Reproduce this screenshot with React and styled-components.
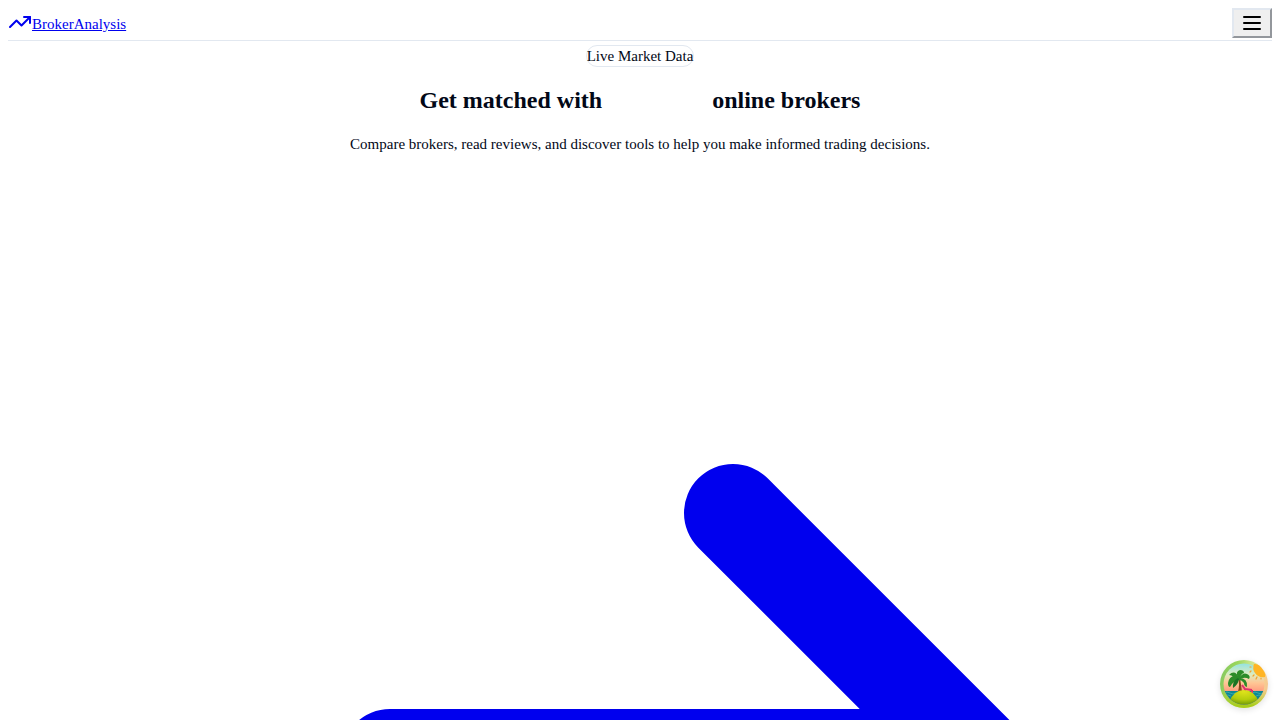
import React from "react";
import styled, { createGlobalStyle } from "styled-components";

const GlobalStyle = createGlobalStyle`
  body {
    margin: 8px;
    background: #ffffff;
    color: #020817;
    font-family: "Liberation Serif", "Times New Roman", serif;
    font-size: 15px;
    line-height: 18px;
    overflow: hidden;
  }
`;

const Header = styled.header`
  display: flex;
  justify-content: space-between;
  align-items: flex-start;
  height: 32px;
  border-bottom: 1px solid #e2e8f0;
`;

const Brand = styled.a`
  display: flex;
  align-items: flex-end;
  padding-top: 2px;
  color: #0000ee;
  text-decoration: underline;
`;

const BrandName = styled.span`
  line-height: 20px;
`;

const MenuButton = styled.button`
  display: flex;
  padding: 1px 6px;
  border: 2px outset #e2e8f0;
  background: #efefef;
  color: #000000;
`;

const LineIcon = styled.svg`
  display: block;
  width: ${(p) => p.$size || "24px"};
  height: auto;
  aspect-ratio: 1;
  flex: none;
  fill: none;
  stroke: currentColor;
  stroke-width: 2;
  stroke-linecap: round;
  stroke-linejoin: round;
`;

const Hero = styled.section`
  display: flex;
  flex-direction: column;
  align-items: center;
  padding-top: 4px;
  text-align: center;
`;

const Badge = styled.div`
  padding: 1px 0;
  border: 1px solid #e2e8f0;
  border-radius: 9999px;
`;

const Title = styled.h1`
  margin: 20px 0;
  font-size: 24px;
  line-height: 27px;
`;

const TitleGap = styled.span`
  display: inline-block;
  width: 98px;
`;

const Lead = styled.p`
  margin: 0 0 16px;
  line-height: 20px;
`;

const ActionLink = styled.a`
  display: flex;
  justify-content: flex-end;
  width: 100%;
  color: #0000ee;
`;

const DevtoolsButton = styled.button`
  position: fixed;
  right: 12px;
  bottom: 12px;
  display: block;
  width: 48px;
  height: 48px;
  padding: 0;
  border: 0;
  border-radius: 50%;
  background: none;
  box-shadow: 0 2px 6px rgba(0, 0, 0, 0.12);
`;

const Island = styled.svg`
  display: block;
  width: 100%;
  height: 100%;
`;

function IslandLogo() {
  return (
    <Island viewBox="0 0 48 48" aria-hidden="true">
      <defs>
        <linearGradient id="sky" x1="0" y1="0" x2="0" y2="1">
          <stop offset="0" stopColor="#7ee0ea" />
          <stop offset="0.3" stopColor="#dcecc0" />
          <stop offset="0.48" stopColor="#ffc694" />
          <stop offset="0.75" stopColor="#ff8674" />
        </linearGradient>
        <linearGradient id="ring" x1="0" y1="0.3" x2="1" y2="0.5">
          <stop offset="0" stopColor="#86c860" />
          <stop offset="0.3" stopColor="#9ad65c" />
          <stop offset="0.55" stopColor="#c6e58a" />
          <stop offset="0.8" stopColor="#f6dc90" />
          <stop offset="1" stopColor="#f5c690" />
        </linearGradient>
        <linearGradient id="ringBase" x1="0" y1="0" x2="0" y2="1">
          <stop offset="0.6" stopColor="#b8d43a" stopOpacity="0" />
          <stop offset="0.95" stopColor="#a8cc1c" />
        </linearGradient>
        <radialGradient id="sand" cx="0.5" cy="0.1" r="0.8">
          <stop offset="0" stopColor="#dfe31b" />
          <stop offset="0.6" stopColor="#b5cd0c" />
          <stop offset="1" stopColor="#6f9a09" />
        </radialGradient>
        <clipPath id="scene"><circle cx="24" cy="24" r="20.500" /></clipPath>
      </defs>
      <circle cx="24" cy="24" r="24" fill="url(#ring)" />
      <circle cx="24" cy="24" r="24" fill="url(#ringBase)" />
      <g clipPath="url(#scene)">
        <rect width="48" height="48" fill="url(#sky)" />
        <path d="M3 31h42v14H3z" fill="#0d8795" />
        <path d="M4 33q3-2 6 0t6 0M32 33q3-2 6 0t6 0M5 36q3-2 6 0M36 36q3-2 6 0" fill="none" stroke="#38a8a8" strokeWidth="1" />
      </g>
      <path d="M34 4q5-1 9 6q3 4 2 7q-7 1-10-4q-3-4-1-9z" fill="#ffb424" />
      <g stroke="#f3a02c" strokeWidth="1.200" strokeLinecap="round">
        <path d="M31 7h-1M31 11l-1 1M34 15l-1 1M37 17l-1 2M41 18v1" />
      </g>
      <path d="M18 18q2 6 0 14h4q-1-8-2-14z" fill="#8b461c" />
      <g fill="#2c8c28">
        <path d="M19 18Q10 13 8 23q0 4 2 4q3-6 9-7z" />
        <path d="M19 18Q15 9 9 15q3 0 4 2q3 0 6 3z" />
        <path d="M18 18Q15 11 20 10q4 0 4 3q-4 1-4 7z" />
        <path d="M19 18q4-6 8-4q4 2 2 5q-5-3-10 1z" />
        <path d="M19 18q9 0 8 9q-3-1-3-4q-2-3-5-3z" />
        <path d="M18 18q-6 3-5 10q5-3 6-9z" fill="#1a7424" />
      </g>
      <path d="M22 25l3 4 7 1M25 29v3M32 30v3" fill="none" stroke="#e0326e" strokeWidth="2" />
      <g clipPath="url(#scene)">
        <path d="M9 42Q14 30 24 30Q34 30 39 42Q24 51 9 42z" fill="url(#sand)" />
      </g>
    </Island>
  );
}

export default function App() {
  return (
    <>
      <GlobalStyle />
      <Header>
        <Brand href="#">
          <LineIcon viewBox="0 0 24 24" aria-hidden="true">
            <path d="M22 7l-8.500 8.500-5-5L2 17" />
            <path d="M16 7h6v6" />
          </LineIcon>
          <BrandName>BrokerAnalysis</BrandName>
        </Brand>
        <MenuButton type="button" aria-label="Open menu">
          <LineIcon viewBox="0 0 24 24" aria-hidden="true">
            <path d="M4 6h16M4 12h16M4 18h16" />
          </LineIcon>
        </MenuButton>
      </Header>
      <main>
        <Hero>
          <Badge>Live Market Data</Badge>
          <Title>
            Get matched with <TitleGap /> online brokers
          </Title>
          <Lead>
            Compare brokers, read reviews, and discover tools to help you make
            informed trading decisions.
          </Lead>
          <ActionLink href="#" aria-label="Continue">
            <LineIcon $size="calc(100% - 88px)" viewBox="0 0 24 24" aria-hidden="true">
              <path d="M13 7l5 5m0 0l-5 5m5-5H6" />
            </LineIcon>
          </ActionLink>
        </Hero>
      </main>
      <DevtoolsButton type="button" aria-label="Open developer tools">
        <IslandLogo />
      </DevtoolsButton>
    </>
  );
}
